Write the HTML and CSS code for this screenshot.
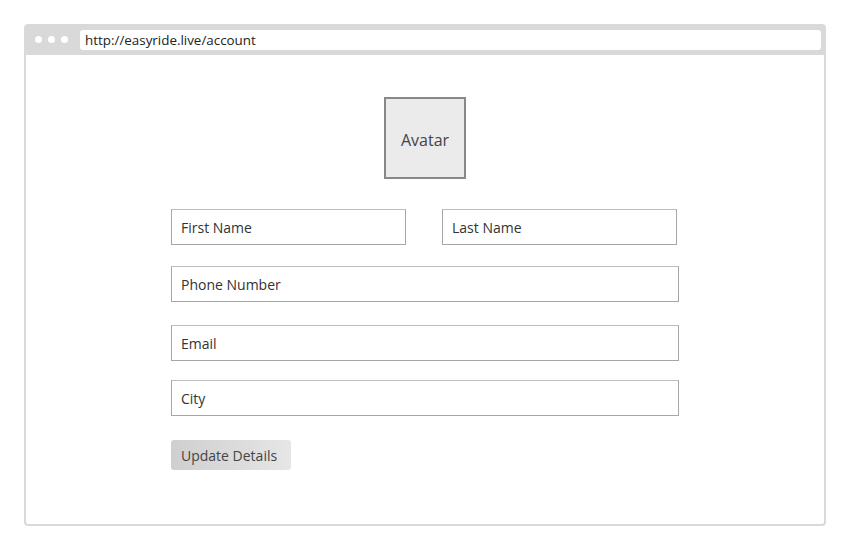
FILE: index.html
```html
<!DOCTYPE html>
<html>
<head>
<meta charset="utf-8">
<link rel="stylesheet" href="styles.css">
</head>
<body>
<div class="window">
  <div class="topbar">
    <div class="dots"><span class="dot"></span><span class="dot"></span><span class="dot"></span></div>
    <div class="url">http://easyride.live/account</div>
  </div>
  <div class="content">
    <div class="avatar">Avatar</div>
    <div class="form">
      <div class="row-two gap-a">
        <div class="field">First Name</div>
        <div class="field">Last Name</div>
      </div>
      <div class="field gap-b">Phone Number</div>
      <div class="field gap-c">Email</div>
      <div class="field gap-d">City</div>
      <div class="button">Update Details</div>
    </div>
  </div>
</div>
</body>
</html>
```
FILE: styles.css
```css
* { box-sizing: border-box; }
html, body { margin: 0; padding: 0; background: #fff; }
body {
  font-family: "Open Sans", "Noto Sans", sans-serif;
  color: #333;
  padding: 24px 0 0 24px;
}
.window {
  width: 802px;
  height: 502px;
  border: 2px solid #d9d9d9;
  border-radius: 4px;
  background: #fff;
  display: flex;
  flex-direction: column;
}
.topbar {
  height: 29px;
  background: #d9d9d9;
  display: flex;
  align-items: flex-start;
  padding: 4px 3px 0 9px;
}
.dots {
  display: flex;
  gap: 6px;
  margin-top: 6px;
  margin-right: 12px;
}
.dot {
  width: 7px;
  height: 7px;
  border-radius: 50%;
  background: #fff;
}
.url {
  flex: 1;
  height: 20px;
  background: #fff;
  border-radius: 3px;
  font-size: 13.4px;
  line-height: 21px;
  padding-left: 5px;
  color: #222;
}
.content {
  display: flex;
  flex-direction: column;
  align-items: center;
  padding-top: 42px;
}
.avatar {
  width: 82px;
  height: 82px;
  border: 2px solid #888;
  background: #ebebeb;
  display: flex;
  align-items: center;
  justify-content: center;
  padding-top: 3px;
  font-size: 16px;
  color: #444;
  margin-bottom: 30px;
}
.form {
  width: 508px;
  display: flex;
  flex-direction: column;
}
.row-two {
  display: flex;
  gap: 36px;
}
.row-two .field { width: 235px; }
.field {
  height: 36px;
  border: 1px solid #a6a6a6;
  border-top-color: #bdbdbd;
  font-size: 14px;
  line-height: 35px;
  padding-left: 9px;
  color: #333;
}
.gap-a { margin-bottom: 21px; }
.gap-b { margin-bottom: 23px; }
.gap-c { margin-bottom: 19px; }
.gap-d { margin-bottom: 24px; }
.button {
  width: 120px;
  height: 30px;
  border-radius: 3px;
  background: linear-gradient(90deg, #cfcfcf, #e6e6e6);
  font-size: 14px;
  line-height: 31px;
  padding-left: 10px;
  color: #444;
}
```
